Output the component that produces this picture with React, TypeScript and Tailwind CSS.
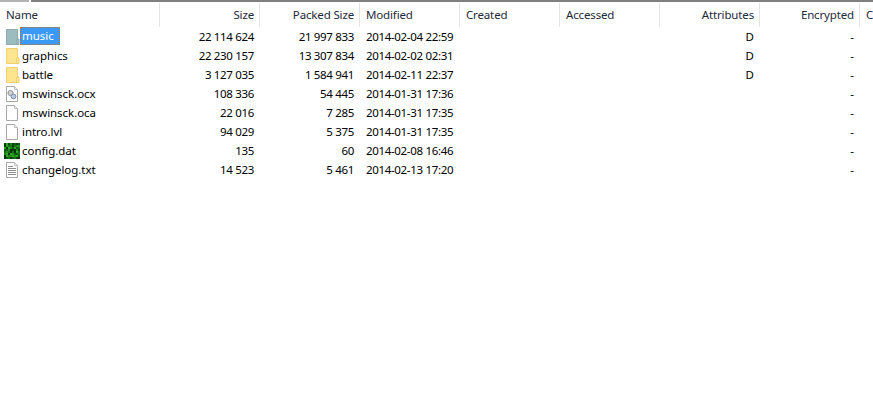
const columns = [
  { label: 'Name', align: 'left' },
  { label: 'Size', align: 'right' },
  { label: 'Packed Size', align: 'right' },
  { label: 'Modified', align: 'left' },
  { label: 'Created', align: 'left' },
  { label: 'Accessed', align: 'left' },
  { label: 'Attributes', align: 'right' },
  { label: 'Encrypted', align: 'right' },
  { label: 'Comment', align: 'left' },
]

type Kind = 'music' | 'folder' | 'ocx' | 'blank' | 'config' | 'text'

const rows: { name: string; kind: Kind; size: string; packed: string; modified: string; attr: string }[] = [
  { name: 'music', kind: 'music', size: '22 114 624', packed: '21 997 833', modified: '2014-02-04 22:59', attr: 'D' },
  { name: 'graphics', kind: 'folder', size: '22 230 157', packed: '13 307 834', modified: '2014-02-02 02:31', attr: 'D' },
  { name: 'battle', kind: 'folder', size: '3 127 035', packed: '1 584 941', modified: '2014-02-11 22:37', attr: 'D' },
  { name: 'mswinsck.ocx', kind: 'ocx', size: '108 336', packed: '54 445', modified: '2014-01-31 17:36', attr: '' },
  { name: 'mswinsck.oca', kind: 'blank', size: '22 016', packed: '7 285', modified: '2014-01-31 17:35', attr: '' },
  { name: 'intro.lvl', kind: 'blank', size: '94 029', packed: '5 375', modified: '2014-01-31 17:35', attr: '' },
  { name: 'config.dat', kind: 'config', size: '135', packed: '60', modified: '2014-02-08 16:46', attr: '' },
  { name: 'changelog.txt', kind: 'text', size: '14 523', packed: '5 461', modified: '2014-02-13 17:20', attr: '' },
]

function FileIcon({ kind }: { kind: Kind }) {
  if (kind === 'music' || kind === 'folder') {
    const fill = kind === 'music' ? '#9dbcc0' : '#fde48f'
    const stroke = kind === 'music' ? '#8fabb0' : '#f0d070'
    return (
      <svg width="16" height="16" viewBox="0 0 16 16" className="shrink-0">
        <path d="M2.5 .5h11v9.5h1.5v5.5h-12.5z" fill={fill} stroke={stroke} />
        <path d="M12.5 15v-4.5h1" fill="none" stroke={stroke} />
      </svg>
    )
  }
  if (kind === 'config') {
    // blotchy green texture thumbnail
    const palette = ['#0b3f0b', '#1f8a1a', '#0f5a0f', '#2da824', '#063006', '#177317']
    const cells = []
    for (let y = 0; y < 8; y++) {
      for (let x = 0; x < 8; x++) {
        const n = Math.floor(Math.abs(Math.sin(x * 12.9898 + y * 78.233) * 43758.5453)) % palette.length
        cells.push(<rect key={`${x}-${y}`} x={x * 2} y={y * 2} width="2" height="2" fill={palette[n]} />)
      }
    }
    return (
      <svg width="16" height="16" viewBox="0 0 16 16" className="shrink-0">
        {cells}
      </svg>
    )
  }
  return (
    <svg width="16" height="16" viewBox="0 0 16 16" className="shrink-0">
      <path d="M2.5 .5h8l3 3v12h-11z" fill="#fff" stroke="#a8a8a8" />
      <path d="M10.5 .5v3h3" fill="#f0f0f0" stroke="#c0c0c0" />
      {kind === 'ocx' && (
        <g>
          <circle cx="6.5" cy="7" r="2.6" fill="#d0d4d8" stroke="#8a8f96" />
          <circle cx="9.5" cy="10.5" r="2.4" fill="#b9cbe0" stroke="#7d8ea3" />
        </g>
      )}
      {kind === 'text' && <path d="M4 4.5h5M4 6.5h8M4 8.5h8M4 10.5h8M4 12.5h8" stroke="#8c8c8c" />}
    </svg>
  )
}

export default function App() {
  return (
    <div className="h-[410px] w-[873px] overflow-hidden bg-white font-['Noto_Sans',sans-serif] text-[11.5px] text-[#000]">
      <div className="flex h-[2px] gap-[2px]">
        <div className="w-[29px] bg-[#b4b4b4]" />
        <div className="flex-1 bg-[#808080]" />
      </div>
      <div className="pt-[1px]">
        <div className="grid h-[24px] w-[1000px] grid-cols-[160px_repeat(8,100px)] items-center whitespace-nowrap tracking-[-0.15px] text-[#1e2a3a]">
          {columns.map((c) => (
            <div
              key={c.label}
              className={`h-full border-r border-[#e5e5e5] pl-[6px] pr-[5px] leading-[23px] ${c.align === 'right' ? 'text-right' : 'text-left'}`}
            >
              {c.label}
            </div>
          ))}
        </div>
      </div>
      {rows.map((r) => (
        <div key={r.name} className="grid h-[19px] w-[1000px] grid-cols-[160px_repeat(8,100px)] items-center whitespace-nowrap leading-[18px]">
          <div className="flex h-[19px] items-center pl-[4px]">
            <FileIcon kind={r.kind} />
            {r.kind === 'music' ? (
              <span className="h-[18px] w-[40px] self-start border border-dotted border-[#c8701c] bg-[#3b99fc] pl-[1px] leading-[16px] text-white">
                {r.name}
              </span>
            ) : (
              <span className="pl-[2px] tracking-[-0.05px]">{r.name}</span>
            )}
          </div>
          <div className="px-[6px] text-right tracking-[-0.33px]">{r.size}</div>
          <div className="px-[6px] text-right tracking-[-0.33px]">{r.packed}</div>
          <div className="px-[6px] tracking-[-0.33px]">{r.modified}</div>
          <div />
          <div />
          <div className="px-[6px] text-right">{r.attr}</div>
          <div className="px-[6px] text-right">-</div>
          <div />
        </div>
      ))}
    </div>
  )
}
